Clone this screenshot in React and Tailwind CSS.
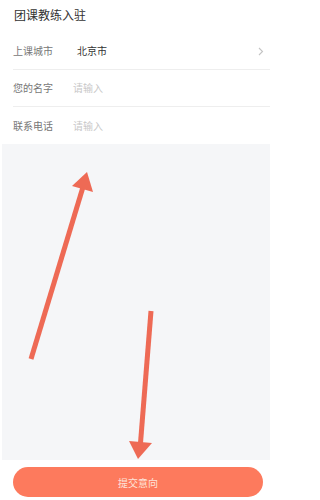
import React from "react";

const font = { fontFamily: '"Noto Sans CJK SC", "Noto Sans", sans-serif' };

function Row({ label, value, placeholder, arrow, last }) {
  return (
    <div className={`flex h-[37px] items-center ${last ? "" : "border-b border-[#eeeeee]"}`}>
      <div className="w-[60px] text-[10px] leading-[14px] text-[#777]">{label}</div>
      {value ? (
        <div className="ml-[4px] flex-1 text-[10px] leading-[14px] text-[#333]">{value}</div>
      ) : (
        <div className="flex-1 text-[10px] leading-[14px] text-[#c8c8c8]">{placeholder}</div>
      )}
      {arrow && (
        <svg width="6" height="9" viewBox="0 0 6 9" className="mr-[6px]">
          <path d="M1 1 L4.5 4.5 L1 8" fill="none" stroke="#c4c4c4" strokeWidth="1.1" />
        </svg>
      )}
    </div>
  );
}

export default function App() {
  return (
    <div className="relative flex h-[500px] w-[270px] flex-col overflow-hidden bg-white" style={font}>
      <div className="h-[33px] pl-[14px] pt-[7px] text-[12px] leading-[16px] text-[#333]">团课教练入驻</div>
      <div className="ml-[13px]">
        <Row label="上课城市" value="北京市" arrow />
        <Row label="您的名字" placeholder="请输入" />
        <Row label="联系电话" placeholder="请输入" last />
      </div>
      <div className="ml-[2px] flex-1 bg-[#f5f6f8]" />
      <div className="h-[40px] pl-[13px] pr-[7px] pt-[7px]">
        <div className="flex h-[30px] items-center justify-center rounded-full bg-[#fd7a5d] text-[10px] text-[#fde3da]">
          提交意向
        </div>
      </div>
      <svg className="pointer-events-none absolute left-0 top-0" width="270" height="500" viewBox="0 0 270 500">
        <line x1="31" y1="359" x2="83" y2="187" stroke="#ee6a55" strokeWidth="5" />
        <polygon points="87,172 72,186 93,192" fill="#ee6a55" />
        <line x1="151" y1="311" x2="140.5" y2="443" stroke="#ee6a55" strokeWidth="5" />
        <polygon points="138,459 129,441 152,443" fill="#ee6a55" />
      </svg>
    </div>
  );
}
